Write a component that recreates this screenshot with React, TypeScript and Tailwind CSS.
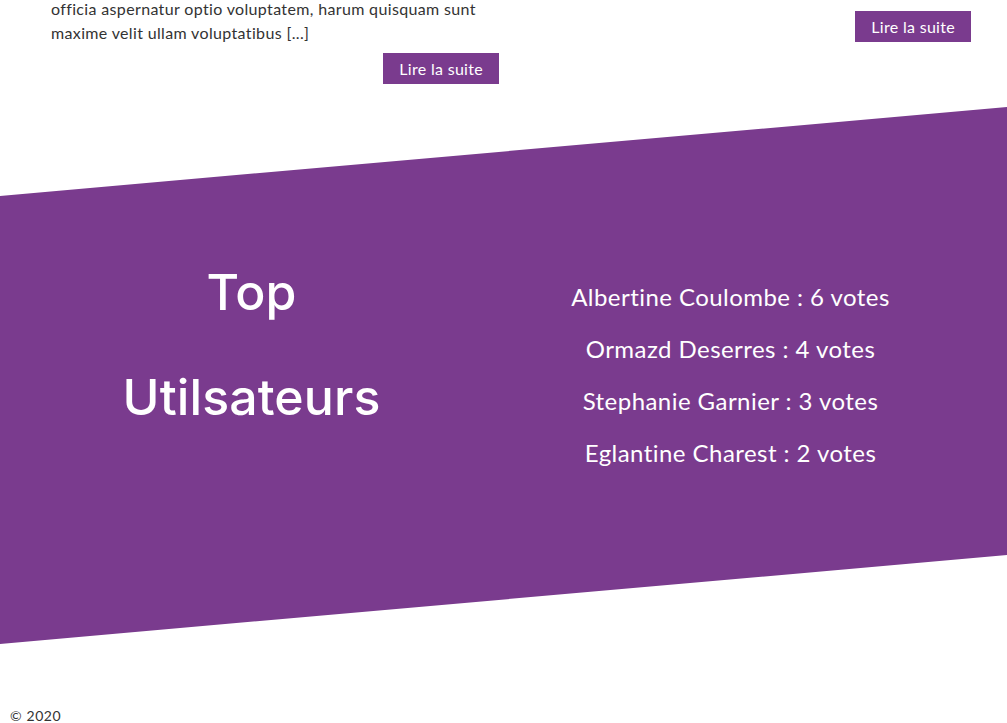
export default function App() {
    const topUsers = [
        { nom: "Albertine Coulombe", votes: 6 },
        { nom: "Ormazd Deserres", votes: 4 },
        { nom: "Stephanie Garnier", votes: 3 },
        { nom: "Eglantine Charest", votes: 2 },
    ];

    return (
        <div className="min-h-screen bg-white text-[#333] font-['Lato',sans-serif] overflow-hidden">
            {/* fin des articles */}
            <section className="-mt-[3px] grid grid-cols-2 gap-6 pl-[51px] pr-[36px]">
                <div className="flex flex-col items-end">
                    <p className="self-stretch text-[16px] leading-6 tracking-[0.35px]">
                        officia aspernatur optio voluptatem, harum quisquam sunt
                        <br />
                        maxime velit ullam voluptatibus [...]
                    </p>
                    <a href="#" className="mt-2 bg-[#7a3b8e] px-4 py-1 text-[16px] leading-[23px] tracking-[0.3px] text-white">
                        Lire la suite
                    </a>
                </div>
                <div className="flex flex-col items-end pt-[14px]">
                    <a href="#" className="bg-[#7a3b8e] px-4 py-1 text-[16px] leading-[23px] tracking-[0.3px] text-white">
                        Lire la suite
                    </a>
                </div>
            </section>

            {/* top utilisateurs */}
            <section className="mt-[23px] h-[537px] bg-[#7a3b8e] text-white [clip-path:polygon(0_89px,100%_0,100%_calc(100%-89px),0_100%)]">
                <div className="grid grid-cols-2 pl-[12px] pr-[37px] pt-[133px]">
                    <h2 className="text-center font-['Inter',sans-serif] text-[50px] font-medium leading-[105px] tracking-[0.1px]">
                        Top
                        <br />
                        Utilsateurs
                    </h2>
                    <ul className="mt-[31px] text-center text-[24px] leading-[52px] tracking-[0.45px]">
                        {topUsers.map((u) => (
                            <li key={u.nom}>
                                {u.nom} : {u.votes} votes
                            </li>
                        ))}
                    </ul>
                </div>
            </section>

            <footer className="mt-[62px] px-[10px] text-[14px] leading-5 tracking-[0.6px] text-[#333]">
                © 2020
            </footer>
        </div>
    );
}
